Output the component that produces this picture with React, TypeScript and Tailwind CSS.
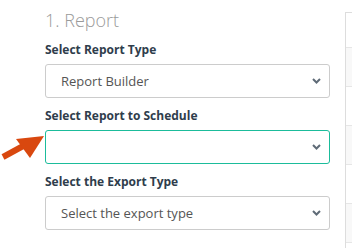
const fields: { id: string; label: string; value: string; active?: boolean }[] = [
  { id: 'type', label: 'Select Report Type', value: 'Report Builder' },
  { id: 'report', label: 'Select Report to Schedule', value: '', active: true },
  { id: 'export', label: 'Select the Export Type', value: 'Select the export type' },
];

function FakeSelect({ value, active }: { value: string; active?: boolean }) {
  return (
    <div
      className={`flex h-[34px] items-center justify-between rounded-[3px] border bg-white pl-[15px] pr-[4px] ${
        active ? 'border-[#1bbc9b]' : 'border-[#cccccc]'
      }`}
    >
      <span className="text-[13px] leading-none text-[#555555]">{value}</span>
      {/* caret */}
      <svg width="9" height="6" viewBox="0 0 9 6" className="mr-[4px] text-[#5f6b77]" aria-hidden="true">
        <polyline points="1,1 4.5,4.5 8,1" fill="none" stroke="currentColor" strokeWidth="2" />
      </svg>
    </div>
  );
}

export default function App() {
  return (
    <div
      className="relative flex h-[248px] w-[352px] overflow-hidden bg-white"
      style={{ fontFamily: '"Open Sans", sans-serif' }}
    >
      <div className="ml-[45px] w-[285px] shrink-0">
        <h2 className="mt-[8px] text-[18px] font-light leading-[24px] text-[#9a9a9a]">1. Report</h2>
        <div className="mt-[10px] flex flex-col gap-[10px]">
          {fields.map(({ id, label, value, active }) => (
            <div key={id} className="flex flex-col gap-[6px]">
              <label className="text-[12px] font-bold leading-[16px] text-[#2f3d4c]">{label}</label>
              <FakeSelect value={value} active={active} />
            </div>
          ))}
        </div>
      </div>

      <div className="ml-[15px] mt-[12px] flex-1 border-l border-t border-[#dddddd]">
        <div className="h-[35px] border-b border-[#e6e6e6]" />
        <div className="h-[39px] border-b border-[#e6e6e6] bg-[#f8f8f8]" />
        <div className="h-[39px] border-b border-[#e6e6e6]" />
        <div className="h-[39px] border-b border-[#e6e6e6] bg-[#f8f8f8]" />
        <div className="h-[39px] border-b border-[#e6e6e6]" />
        <div className="h-[39px] border-b border-[#e6e6e6] bg-[#f8f8f8]" />
      </div>

      <svg className="absolute left-0 top-[125px]" width="48" height="40" viewBox="0 0 48 40" aria-hidden="true">
        <line x1="3" y1="32" x2="25" y2="20" stroke="#d9480f" strokeWidth="6" />
        <polygon points="44,11 16,14 30,33" fill="#d9480f" />
      </svg>
    </div>
  );
}
